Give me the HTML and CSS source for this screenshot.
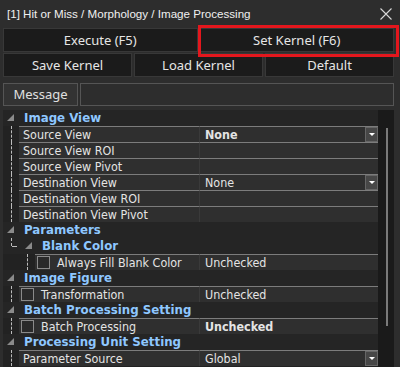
FILE: index.html
```html
<!DOCTYPE html>
<html lang="en">
<head>
  <meta charset="UTF-8" />
  <title>Hit or Miss</title>
  <link rel="stylesheet" href="styles.css">
</head>
<body>
  <div class="window">
    <div class="titlebar">
      <span class="title">[1] Hit or Miss / Morphology / Image Processing</span>
      <svg class="close" width="12" height="12" viewBox="0 0 12 12">
        <path d="M0.5 0.5 L11.5 11.5 M11.5 0.5 L0.5 11.5" stroke="#d8d8d8" stroke-width="1.1" fill="none"/>
      </svg>
    </div>

    <div class="toolbar">
      <button class="btn">Execute (F5)</button>
      <button class="btn selected">Set Kernel (F6)<span class="highlight"></span></button>
    </div>
    <div class="toolbar second">
      <button class="btn">Save Kernel</button>
      <button class="btn">Load Kernel</button>
      <button class="btn">Default</button>
    </div>

    <div class="message-bar">
      <div class="tab">Message</div>
      <div class="message-box"></div>
    </div>

    <div class="grid">
      <div class="grid-body">
        <div class="row cat">
          <div class="indent lvl0"><span class="tri"></span></div>
          <div class="label">Image View</div>
        </div>
        <div class="row prop">
          <div class="indent lvl1"><span class="vline"></span></div>
          <div class="name">Source View</div>
          <div class="value bold">None<span class="drop"></span></div>
        </div>
        <div class="row prop">
          <div class="indent lvl1"><span class="vline"></span></div>
          <div class="name">Source View ROI</div>
          <div class="value"></div>
        </div>
        <div class="row prop">
          <div class="indent lvl1"><span class="vline"></span></div>
          <div class="name">Source View Pivot</div>
          <div class="value"></div>
        </div>
        <div class="row prop">
          <div class="indent lvl1"><span class="vline"></span></div>
          <div class="name">Destination View</div>
          <div class="value">None<span class="drop"></span></div>
        </div>
        <div class="row prop">
          <div class="indent lvl1"><span class="vline"></span></div>
          <div class="name">Destination View ROI</div>
          <div class="value"></div>
        </div>
        <div class="row prop">
          <div class="indent lvl1"><span class="vline"></span></div>
          <div class="name">Destination View Pivot</div>
          <div class="value"></div>
        </div>

        <div class="row cat">
          <div class="indent lvl0"><span class="tri"></span></div>
          <div class="label">Parameters</div>
        </div>
        <div class="row cat">
          <div class="indent lvl1b"><span class="vline short"></span><span class="hline"></span><span class="tri"></span></div>
          <div class="label">Blank Color</div>
        </div>
        <div class="row prop">
          <div class="indent lvl2"><span class="vline"></span></div>
          <div class="name"><span class="check"></span>Always Fill Blank Color</div>
          <div class="value">Unchecked</div>
        </div>

        <div class="row cat">
          <div class="indent lvl0"><span class="tri"></span></div>
          <div class="label">Image Figure</div>
        </div>
        <div class="row prop">
          <div class="indent lvl1"><span class="vline"></span></div>
          <div class="name"><span class="check"></span>Transformation</div>
          <div class="value">Unchecked</div>
        </div>

        <div class="row cat">
          <div class="indent lvl0"><span class="tri"></span></div>
          <div class="label">Batch Processing Setting</div>
        </div>
        <div class="row prop">
          <div class="indent lvl1"><span class="vline"></span></div>
          <div class="name"><span class="check"></span>Batch Processing</div>
          <div class="value bold">Unchecked</div>
        </div>

        <div class="row cat">
          <div class="indent lvl0"><span class="tri"></span></div>
          <div class="label">Processing Unit Setting</div>
        </div>
        <div class="row prop">
          <div class="indent lvl1"><span class="vline"></span></div>
          <div class="name">Parameter Source</div>
          <div class="value">Global<span class="drop"></span></div>
        </div>
      </div>
      <div class="scrollbar"><span class="thumb"></span></div>
    </div>
  </div>
</body>
</html>
```

FILE: styles.css
```css
body {
  margin: 0;
  background-color: #2d2d2d;
  font-family: "Noto Sans", "Open Sans", sans-serif;
  color: #e6e6e6;
}
.window {
  width: 400px;
  height: 367px;
  box-sizing: border-box;
  padding: 0 6px 0 3px;
  background-color: #2d2d2d;
  overflow: hidden;
}
.titlebar {
  height: 26px;
  display: flex;
  align-items: center;
  justify-content: space-between;
  padding: 0 2px 0 4px;
  font-family: "Liberation Sans", Arial, sans-serif;
  font-size: 11.6px;
  color: #f0f0f0;
}
.close {
  display: block;
  margin-top: 2px;
}
.toolbar {
  display: flex;
  gap: 2px;
  height: 24px;
  margin-top: 2px;
}
.toolbar.second {
  margin-top: 1px;
}
.btn {
  flex: 1;
  position: relative;
  background-color: #1b1b1b;
  border: 1px solid #383838;
  color: #e6e6e6;
  font-family: "Noto Sans", "Open Sans", sans-serif;
  font-size: 13px;
  padding: 0;
}
.highlight {
  position: absolute;
  z-index: 2;
  left: -3px;
  right: -6px;
  top: -4px;
  bottom: -6px;
  border: 3px solid #e3171d;
}
.message-bar {
  display: flex;
  gap: 2px;
  height: 23px;
  margin-top: 6px;
}
.tab {
  width: 73px;
  border: 1px solid #555;
  background-color: #333;
  font-size: 13px;
  line-height: 21px;
  text-align: center;
  color: #e0e0e0;
}
.message-box {
  flex: 1;
  border: 1px solid #555;
  background-color: #2d2d2d;
}
.grid {
  display: flex;
  margin-top: 4px;
  height: 257px;
  background-color: #222;
}
.grid-body {
  width: 375px;
  font-family: "DejaVu Sans Condensed", "DejaVu Sans", sans-serif;
  font-size: 12.4px;
}
.row {
  display: flex;
  height: 16px;
}
.cat {
  background-color: #252525;
}
.indent {
  position: relative;
  flex-shrink: 0;
}
.lvl0 { width: 20px; }
.lvl1 { width: 16px; }
.lvl1b { width: 38px; }
.lvl2 { width: 32px; }
.tri {
  position: absolute;
  right: 9px;
  top: 4px;
  width: 0;
  height: 0;
  border-left: 7px solid transparent;
  border-bottom: 7px solid #8a8a8a;
}
.vline {
  position: absolute;
  left: 8px;
  top: 0;
  bottom: 0;
  border-left: 1px dashed #bcbcbc;
}
.lvl2 .vline { left: 24px; }
.vline.short { bottom: 8px; }
.hline {
  position: absolute;
  left: 9px;
  top: 8px;
  width: 5px;
  border-top: 1px dashed #bcbcbc;
}
.label {
  font-family: "DejaVu Sans", sans-serif;
  font-weight: bold;
  color: #8ec7ff;
  font-size: 11.8px;
  line-height: 16px;
  padding-left: 1px;
}
.name, .value {
  box-sizing: border-box;
  border-top: 1px solid #7c7c7c;
  background-color: #2f2f2f;
  line-height: 15px;
  white-space: nowrap;
  overflow: hidden;
}
.name {
  flex: 1;
  display: flex;
  align-items: center;
  padding-left: 4px;
  color: #e4e4e4;
}
.value {
  position: relative;
  width: 179px;
  padding-left: 5px;
  color: #e4e4e4;
  border-left: 1px solid #3a3a3a;
}
.value.bold {
  font-weight: bold;
}
.check {
  width: 11px;
  height: 11px;
  border: 1px solid #8a8a8a;
  background-color: #2a2a2a;
  margin: 0 7px 0 -2px;
  flex-shrink: 0;
}
.drop {
  position: absolute;
  right: 0;
  top: 0;
  width: 11px;
  height: 13px;
  border: 1px solid #666;
  background-color: #474747;
}
.drop::after {
  content: "";
  position: absolute;
  left: 3px;
  top: 5px;
  border-left: 3px solid transparent;
  border-right: 3px solid transparent;
  border-top: 3px solid #fff;
}
.scrollbar {
  position: relative;
  width: 16px;
  background-color: #1a1a1a;
}
.thumb {
  position: absolute;
  left: 8px;
  top: 18px;
  width: 2px;
  height: 198px;
  background-color: #7a7a7a;
}
```
